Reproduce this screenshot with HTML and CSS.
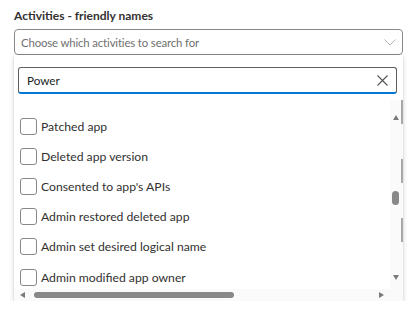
FILE: index.html
```html
<!DOCTYPE html>
<html lang="en">
<head>
<meta charset="utf-8">
<title>Activities - friendly names</title>
<link rel="stylesheet" href="styles.css">
</head>
<body>
<div class="field">
  <div class="label">Activities - friendly names</div>
  <div class="dropdown">
    <span class="placeholder">Choose which activities to search for</span>
    <svg class="chevron" width="12" height="7" viewBox="0 0 12 7"><path d="M0.5 0.5 L6 6 L11.5 0.5" fill="none" stroke="#b3b3b3" stroke-width="1"/></svg>
  </div>
  <div class="popup">
    <div class="search">
      <span class="value">Power</span>
      <svg class="clear" width="11" height="11" viewBox="0 0 11 11"><path d="M0.5 0.5 L10.5 10.5 M10.5 0.5 L0.5 10.5" fill="none" stroke="#555" stroke-width="1.1"/></svg>
    </div>
    <div class="listwrap">
      <div class="list">
        <div class="row"><span class="cb"></span><span>Patched app</span></div>
        <div class="row"><span class="cb"></span><span>Deleted app version</span></div>
        <div class="row"><span class="cb"></span><span>Consented to app's APIs</span></div>
        <div class="row"><span class="cb"></span><span>Admin restored deleted app</span></div>
        <div class="row"><span class="cb"></span><span>Admin set desired logical name</span></div>
        <div class="row"><span class="cb"></span><span>Admin modified app owner</span></div>
      </div>
      <div class="vscroll">
        <span class="arrow up"></span>
        <span class="vthumb"></span>
        <span class="arrow down"></span>
      </div>
      <div class="hscroll">
        <span class="arrow left"></span>
        <span class="hthumb"></span>
        <span class="arrow right"></span>
      </div>
      <div class="corner"></div>
    </div>
  </div>
</div>
</body>
</html>
```
FILE: styles.css
```css
* { box-sizing: border-box; }
body {
  margin: 0;
  background: #fff;
  font-family: Lato, "Open Sans", sans-serif;
  font-size: 12.2px;
  color: #323130;
}
.field {
  width: 389px;
  margin-left: 14px;
  padding-top: 7px;
}
.label {
  font-weight: 700;
  font-size: 12px;
  height: 18px;
  line-height: 18px;
  margin-bottom: 4px;
}
.dropdown {
  height: 26px;
  border: 1px solid #8a8886;
  border-radius: 4px;
  display: flex;
  align-items: center;
  justify-content: space-between;
  padding: 0 6px 0 6px;
}
.placeholder { color: #707070; font-size: 11.4px; letter-spacing: -0.15px; }
.popup {
  height: 246px;
  background: #fff;
  box-shadow: 0 2px 5px rgba(0,0,0,0.18), 0 0 1px rgba(0,0,0,0.15);
  display: flex;
  flex-direction: column;
}
.search {
  margin: 12px 6px 0 4px;
  height: 27px;
  border: 1px solid #605e5c;
  border-bottom: 2px solid #0078d4;
  border-radius: 3px;
  display: flex;
  align-items: center;
  justify-content: space-between;
  padding: 0 8px 0 8px;
}
.value { color: #201f1e; font-size: 11.7px; }
.listwrap {
  margin-top: 6px;
  flex: 1;
  display: grid;
  grid-template-columns: 1fr 13px;
  grid-template-rows: 1fr 12px;
  overflow: hidden;
}
.list {
  padding: 11px 0 0 6px;
  overflow: hidden;
}
.row {
  height: 30.2px;
  display: flex;
  align-items: center;
  gap: 4px;
  white-space: nowrap;
}
.cb {
  width: 17px;
  height: 17px;
  border: 1px solid #8a8886;
  border-radius: 3px;
  flex: none;
}
.vscroll {
  background-color: #fafafa;
  background-image: repeating-linear-gradient(to bottom, #a8a8a8 0 24px, transparent 24px 59px);
  background-size: 2px 142px;
  background-position: right top;
  background-repeat: no-repeat;
  display: flex;
  flex-direction: column;
  align-items: center;
  padding: 15px 2px 9px 0;
}
.hscroll {
  background: #fafafa;
  display: flex;
  align-items: center;
  padding: 0 0 0 6px;
}
.corner { background: #fafafa; }
.arrow { width: 0; height: 0; border-style: solid; display: block; }
.arrow.up { border-width: 0 3.5px 5px 3.5px; border-color: transparent transparent #7a7a7a transparent; }
.arrow.down { border-width: 5px 3.5px 0 3.5px; border-color: #7a7a7a transparent transparent transparent; margin-top: auto; }
.arrow.left { border-width: 3.5px 5px 3.5px 0; border-color: transparent #7a7a7a transparent transparent; }
.arrow.right { border-width: 3.5px 0 3.5px 5px; border-color: transparent transparent transparent #7a7a7a; margin-left: auto; margin-right: 6px; }
.vthumb {
  width: 7px;
  height: 14px;
  border-radius: 4px;
  background: #888;
  margin-top: 71px;
}
.hthumb {
  width: 200px;
  height: 6px;
  border-radius: 3px;
  background: #888;
  margin-left: 9px;
}
```
